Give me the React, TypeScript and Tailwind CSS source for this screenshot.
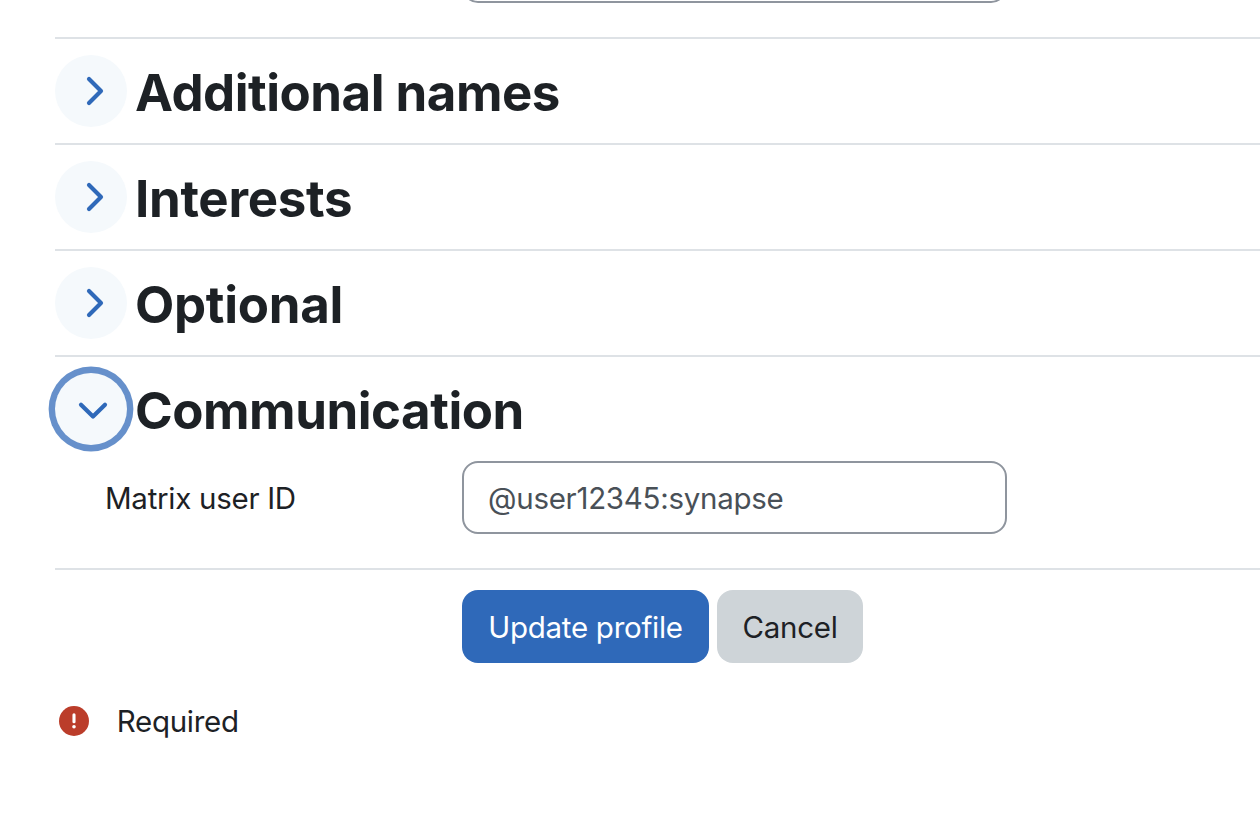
import { useState } from "react";

const initialSections = [
  { id: "names", title: "Additional names", tracking: "tracking-[-0.5px]", open: false },
  { id: "interests", title: "Interests", tracking: "tracking-[-0.3px]", open: false },
  { id: "optional", title: "Optional", tracking: "tracking-[-0.3px]", open: false }
];

function Chevron({ open }: { open: boolean }) {
  return (
    <svg width="72" height="72" viewBox="0 0 72 72" fill="none" stroke="#2f69b9" strokeWidth="4.2" strokeLinecap="round" strokeLinejoin="round">
      <path d={open ? "M26 31.7L38 43.5L50 31.7" : "M34 24L46 36L34 48"} />
    </svg>
  );
}

export default function App() {
  const [sections, setSections] = useState(initialSections);
  const [communicationOpen, setCommunicationOpen] = useState(true);
  const [matrixId, setMatrixId] = useState("@user12345:synapse");

  function toggle(id: string) {
    setSections((prev) => prev.map((s) => (s.id === id ? { ...s, open: !s.open } : s)));
  }

  return (
    <form className="h-[824px] overflow-hidden bg-white pl-[55px] font-[Inter,sans-serif] text-[29.5px] tracking-[-0.28px] text-[#1d2125]">
      <div className="flex h-[37px] items-start pl-[407px]">
        <div className="-mt-[70px] h-[73px] w-[545px] shrink-0 rounded-2xl border-2 border-[#8f959e]" />
      </div>

      {sections.map((section) => (
        <section key={section.id} className="flex h-[106px] items-center gap-2 border-t-2 border-[#dee2e6]">
          <button type="button" onClick={() => toggle(section.id)} className="size-[72px] rounded-full bg-[#f5f9fc]">
            <Chevron open={section.open} />
          </button>
          <h3 className={`pt-1 text-[51px] leading-[52px] font-bold ${section.tracking}`}>{section.title}</h3>
        </section>
      ))}

      <section className="h-[213px] border-t-2 border-[#dee2e6]">
        <div className="flex h-[104px] items-center gap-2">
          <button type="button" onClick={() => setCommunicationOpen(!communicationOpen)} className="size-[72px] rounded-full bg-[#f5f9fc] ring-[6.4px] ring-[#6690cb]">
            <Chevron open={communicationOpen} />
          </button>
          <h3 className="pt-1 text-[51px] leading-[52px] font-bold tracking-[-0.48px]">Communication</h3>
        </div>
        {communicationOpen && (
          <div className="flex h-[73px] items-center">
            <label htmlFor="matrix" className="w-[407px] pt-0.5 pl-[50px]">Matrix user ID</label>
            <input
              id="matrix"
              value={matrixId}
              onChange={(e) => setMatrixId(e.target.value)}
              className="h-[73px] w-[545px] rounded-2xl border-2 border-[#8f959e] px-6 pt-px text-[#495057]"
            />
          </div>
        )}
      </section>

      <div className="flex gap-2 border-t-2 border-[#dee2e6] pt-5 pl-[407px]">
        <button type="button" className="h-[73px] w-[247px] rounded-2xl bg-[#2f69b9] pt-0.5 text-white">Update profile</button>
        <button type="button" className="h-[73px] w-[146px] rounded-2xl bg-[#ced4d8] pt-0.5">Cancel</button>
      </div>

      <div className="mt-[35px] flex h-[45px] items-center gap-7 pl-[3.7px]">
        <svg width="30" height="30" viewBox="0 0 30 30" fill="none">
          <circle cx="15" cy="15" r="15" fill="#bb3d2a" />
          <path d="M15 8.7V15.8" stroke="white" strokeWidth="3.1" strokeLinecap="round" />
          <circle cx="15" cy="20.8" r="1.8" fill="white" />
        </svg>
        <span className="pt-0.5">Required</span>
      </div>
    </form>
  );
}
